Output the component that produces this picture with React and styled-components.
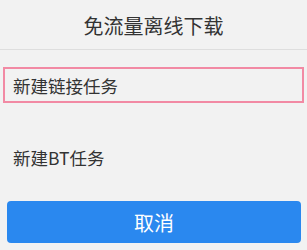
import React from "react";
import styled, { createGlobalStyle } from "styled-components";

const GlobalStyle = createGlobalStyle`
  html, body {
    margin: 0;
    padding: 0;
    background: #f2f2f2;
  }
  body {
    font-family: "Noto Sans CJK SC", "Noto Sans", sans-serif;
  }
`;

const Sheet = styled.div`
  width: 307px;
  height: 250px;
  background: #f2f2f2;
  display: flex;
  flex-direction: column;
  box-sizing: border-box;
  overflow: hidden;
`;

const Header = styled.div`
  height: 50px;
  box-sizing: border-box;
  border-bottom: 1px solid #dedede;
  display: flex;
  align-items: center;
  justify-content: center;
  padding-top: 1px;
  font-size: 20px;
  color: #333;
`;

const List = styled.div`
  display: flex;
  flex-direction: column;
  gap: 36px;
  padding: 17px 3px 0;
`;

const Item = styled.div`
  height: 36px;
  box-sizing: border-box;
  display: flex;
  align-items: center;
  padding-left: 8px;
  font-size: 17.5px;
  color: #333;
  border: 2px solid ${(p) => (p.$focused ? "#f28aa4" : "transparent")};
`;

const CancelButton = styled.button`
  margin: 26px 6px 0 7px;
  height: 42px;
  border: none;
  border-radius: 4px;
  background: #2a88ef;
  color: #fff;
  font-family: inherit;
  font-size: 20px;
  display: flex;
  align-items: center;
  justify-content: center;
  padding: 0;
`;

const App = () => {
  return (
    <Sheet>
      <GlobalStyle />
      <Header>免流量离线下载</Header>
      <List>
        <Item $focused>新建链接任务</Item>
        <Item>新建BT任务</Item>
      </List>
      <CancelButton>取消</CancelButton>
    </Sheet>
  );
};

export default App;
